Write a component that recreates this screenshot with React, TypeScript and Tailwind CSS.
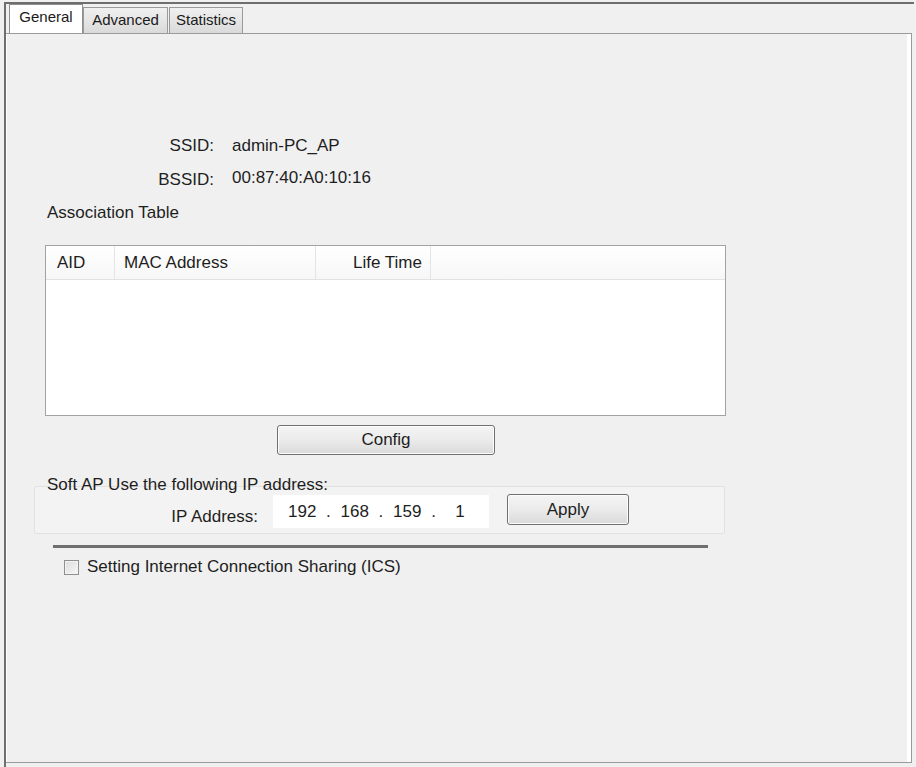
import * as React from "react";

const font = "font-['Liberation_Sans',Arial,sans-serif]";

function WinButton({ label, className }: { label: string; className: string }) {
  return (
    <button
      type="button"
      className={`${className} rounded-[3px] border border-[#707070] bg-gradient-to-b from-[#f4f4f4] via-[#ebebeb] to-[#dadada] shadow-[inset_0_0_0_1px_#fcfcfc] text-[17px] text-[#1e1e1e] flex items-center justify-center`}
    >
      {label}
    </button>
  );
}

function Tab({ label, active, width }: { label: string; active?: boolean; width: string }) {
  return (
    <div
      className={`${width} flex items-center justify-center border border-b-0 text-[15px] text-[#1a1a1a] ${
        active
          ? "h-[29px] bg-white border-[#8e8e8e] pb-[3px]"
          : "h-[26px] bg-gradient-to-b from-[#f0f0f0] to-[#dadada] border-[#9a9a9a]"
      }`}
    >
      {label}
    </div>
  );
}

export default function App() {
  return (
    <main className={`w-[916px] h-[767px] bg-[#f0f0f0] pt-[2px] pl-[4px] overflow-hidden ${font}`}>
      <div className="w-[910px] h-[765px] border-l-2 border-t-2 border-[#6e6e6e]">
        {/* tab strip */}
        <div className="h-[29px] pl-[3px] flex items-end">
          <Tab label="General" active width="w-[74px]" />
          <Tab label="Advanced" width="w-[85px]" />
          <div className="w-[1px]" />
          <Tab label="Statistics" width="w-[74px]" />
        </div>

        {/* panel */}
        <div className="w-[906px] h-[730px] border border-l-0 border-[#9a9a9a] shadow-[inset_1px_0_0_#ffffff,inset_-4px_0_0_#ffffff] text-[17px] text-[#1e1e1e]">
          {/* SSID info */}
          <div className="mt-[100px] ml-[100px] grid grid-cols-[108px_auto] gap-x-[18px] gap-y-[8px]">
            <div className="h-[24px] flex items-center justify-end">SSID:</div>
            <div className="h-[24px] flex items-center">admin-PC_AP</div>
            <div className="h-[24px] flex items-center justify-end pt-[4px]">BSSID:</div>
            <div className="h-[24px] flex items-center">00:87:40:A0:10:16</div>
          </div>

          <div className="mt-[11px] ml-[41px] h-[24px] flex items-center">Association Table</div>

          {/* association table */}
          <div className="mt-[20px] ml-[39px] w-[681px] h-[171px] border border-[#a3a3a3] bg-white">
            <div className="h-[34px] flex border-b border-[#e2e2e2] bg-gradient-to-b from-white to-[#f7f7f7]">
              <div className="w-[69px] pl-[11px] flex items-center border-r border-[#e4e4e4]">AID</div>
              <div className="w-[201px] pl-[9px] flex items-center border-r border-[#e4e4e4]">MAC Address</div>
              <div className="w-[115px] pr-[8px] flex items-center justify-end border-r border-[#e4e4e4]">Life Time</div>
              <div className="flex-1" />
            </div>
          </div>

          <WinButton label="Config" className="mt-[9px] ml-[271px] w-[218px] h-[30px]" />

          {/* soft AP group */}
          <div className="mt-[31px] ml-[28px] w-[691px] h-[48px] border border-[#e1e1e1] rounded-[2px] bg-[#f3f3f3]">
            <div className="-mt-[12px] h-[20px] pl-[12px] flex items-center">Soft AP Use the following IP address:</div>
            <div className="flex items-start">
              <div className="w-[223px] pt-[9px] text-right">IP Address:</div>
              <div className="ml-[15px] w-[216px] h-[33px] bg-white flex items-center pl-[15px] whitespace-pre [word-spacing:5px]">
                192 . 168 . 159 .  1
              </div>
              <WinButton label="Apply" className="ml-[18px] -mt-[1px] w-[122px] h-[31px]" />
            </div>
          </div>

          <div className="mt-[11px] ml-[47px] w-[655px] h-[3px] bg-[#6f6f6f]" />

          <div className="mt-[9px] ml-[58px] h-[20px] flex items-center gap-[8px]">
            <div className="w-[15px] h-[15px] border border-[#8f8f8f] bg-gradient-to-br from-[#dcdcdc] to-[#f7f7f7] shadow-[inset_0_0_0_1px_#f4f4f4]" />
            <span>Setting Internet Connection Sharing (ICS)</span>
          </div>
        </div>
      </div>
    </main>
  );
}
